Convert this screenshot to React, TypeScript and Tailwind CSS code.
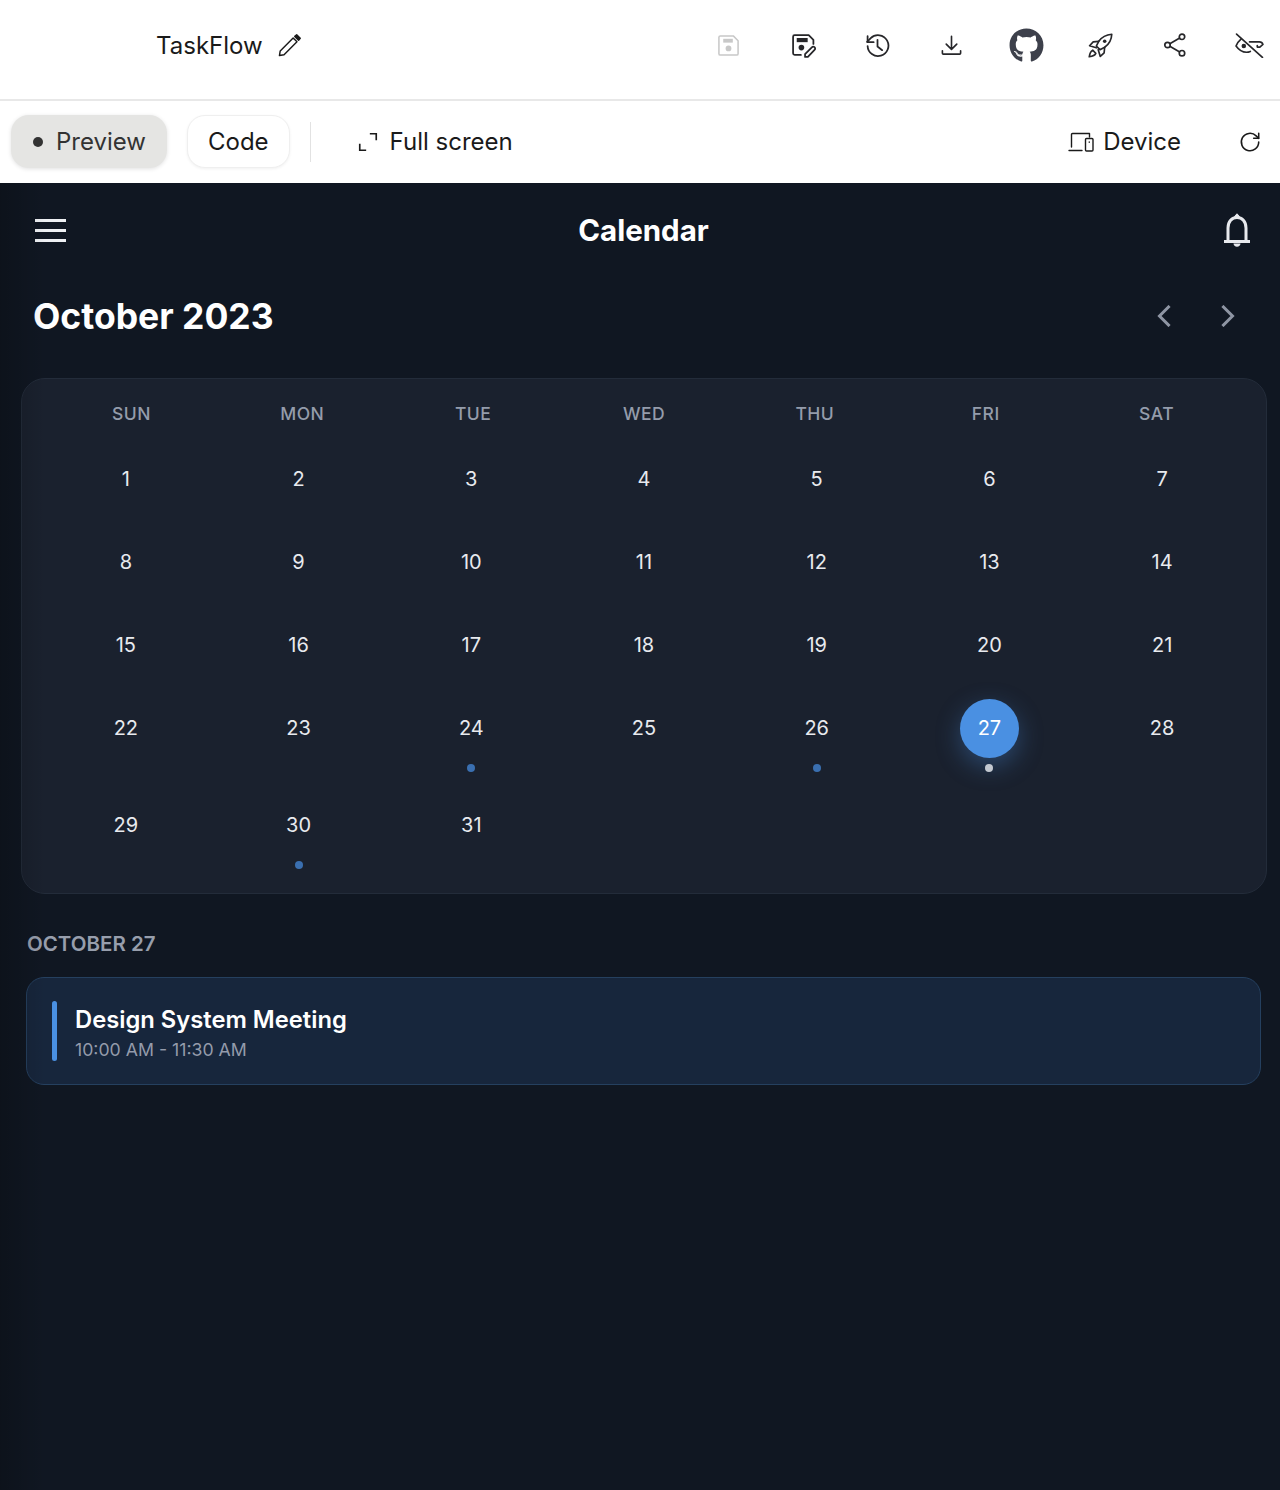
import React from "react";
import { FaGithub } from "react-icons/fa";

const weekdays = ["SUN", "MON", "TUE", "WED", "THU", "FRI", "SAT"];
const dots: Record<number, boolean> = { 24: true, 26: true, 27: true, 30: true };

type P = { className?: string };

function PencilIcon({ className }: P) {
  return (
    <svg viewBox="0 0 24 24" className={className} fill="none" stroke="currentColor" strokeWidth="1.5" strokeLinejoin="round">
      <path d="M1.500 22.500l.8-4.800L15.800 4.200l4 4L6.300 21.700z" />
      <path d="M17.500 2.500l2-1.700 3.700 3.700-1.700 2z" fill="currentColor" />
    </svg>
  );
}

function SaveIcon({ className }: P) {
  return (
    <svg viewBox="0 0 24 24" className={className} fill="none" stroke="currentColor" strokeWidth="1.6" strokeLinejoin="round">
      <path d="M3.500 2h13.500l5 5v13.500a1.500 1.500 0 0 1-1.500 1.500h-17a1.500 1.500 0 0 1-1.500-1.500v-17a1.500 1.500 0 0 1 1.500-1.500z" />
      <rect x="6.500" y="5" width="10" height="4" fill="currentColor" stroke="none" />
      <circle cx="12" cy="15" r="3" fill="currentColor" stroke="none" />
    </svg>
  );
}

function SaveEditIcon({ className }: P) {
  return (
    <svg viewBox="0 0 24 24" className={className} fill="none" stroke="currentColor" strokeWidth="1.7" strokeLinejoin="round" strokeLinecap="round">
      <path d="M9.500 21H3.500A1.500 1.500 0 0 1 2 19.500V3.500A1.500 1.500 0 0 1 3.500 2h13.500l4.500 4.500v4" />
      <rect x="5.500" y="4.800" width="10.500" height="4" fill="currentColor" stroke="none" />
      <circle cx="10" cy="14" r="2.700" fill="currentColor" stroke="none" />
      <path d="M13.500 23v-2.800l6.500-6.500a1.700 1.700 0 0 1 2.600 2.500l-6.400 6.800z" />
    </svg>
  );
}

function HistoryIcon({ className }: P) {
  return (
    <svg viewBox="0 0 24 24" className={className} fill="none" stroke="currentColor" strokeWidth="1.7" strokeLinecap="round" strokeLinejoin="round">
      <path d="M2.500 12.500A10 10 0 1 0 5.500 5L2 8.500" />
      <path d="M2.500 3v5.800h5.800" />
      <path d="M12 6.500v6.500l4.500 3.500" />
    </svg>
  );
}

function DownloadIcon({ className }: P) {
  return (
    <svg viewBox="0 0 24 24" className={className} fill="none" stroke="currentColor" strokeWidth="1.7" strokeLinecap="round" strokeLinejoin="round">
      <path d="M12 2.500v13.500M6.500 10.500l5.500 5.500 5.500-5.500M2.500 17.500V20a1 1 0 0 0 1 1h17a1 1 0 0 0 1-1v-2.500" />
    </svg>
  );
}

function RocketIcon({ className }: P) {
  return (
    <svg viewBox="0 0 24 24" className={className} fill="none" stroke="currentColor" strokeWidth="1.6" strokeLinecap="round" strokeLinejoin="round">
      <path d="M22.800 1.200c-5.300.4-9.500 2.600-12.500 6.800l-2.300 4.500 3.500 3.500 4.500-2.300c4.300-3 6.600-7.200 6.800-12.500z" />
      <path d="M10.300 8l-5.300.5-3.500 3.700 6.500 2" />
      <path d="M16 13.700l-.5 5.300-3.700 3.500-2-6.500" />
      <circle cx="16" cy="8" r="1.700" fill="currentColor" stroke="none" />
      <path d="M4.500 16.500c-1.700.7-2.800 3-3.300 6.300 3.300-.5 5.600-1.600 6.300-3.300z" />
    </svg>
  );
}

function ShareIcon({ className }: P) {
  return (
    <svg viewBox="0 0 24 24" className={className} fill="none" stroke="currentColor" strokeWidth="1.7">
      <circle cx="19" cy="3.800" r="2.700" />
      <circle cx="4.500" cy="12" r="2.700" />
      <circle cx="19" cy="20.200" r="2.700" />
      <path d="M6.800 10.700l9.900-5.600M6.800 13.300l9.900 5.600" />
    </svg>
  );
}

function EyeOffIcon({ className }: P) {
  return (
    <svg viewBox="0 0 28 24" className={className} fill="none" stroke="currentColor" strokeWidth="1.6" strokeLinecap="round" strokeLinejoin="round">
      <path d="M1.500 1l25 22.500" />
      <path d="M6 5.500C3.700 7.500 1.800 10 1 12.500c2.500 3.500 6 6 10 6 1.500 0 2.600-.3 3.800-.8" />
      <circle cx="8.500" cy="12.500" r="2.200" fill="currentColor" stroke="none" />
      <path d="M14 8.500h9.500c1.500 0 3 1 3.500 2.500l-3 2.500h-2.500v-1.500" />
    </svg>
  );
}

function ExpandIcon({ className }: P) {
  return (
    <svg viewBox="0 0 24 24" className={className} fill="none" stroke="currentColor" strokeWidth="1.8">
      <path d="M14 3h7v7M3 14v7h7" />
    </svg>
  );
}

function DeviceIcon({ className }: P) {
  return (
    <svg viewBox="0 0 26 24" className={className} fill="none" stroke="currentColor" strokeWidth="1.4" strokeLinecap="round" strokeLinejoin="round">
      <path d="M3.500 17V4.500a1 1 0 0 1 1-1H21.500V7" />
      <path d="M1 20.500h13" />
      <rect x="17.500" y="8.500" width="7.500" height="12.500" rx="1" />
      <path d="M21.250 12v.2" />
    </svg>
  );
}

function RefreshIcon({ className }: P) {
  return (
    <svg viewBox="0 0 24 24" className={className} fill="none" stroke="currentColor" strokeWidth="1.7" strokeLinecap="round" strokeLinejoin="round">
      <path d="M21.500 12a9.500 9.500 0 1 1-2.800-6.700L21.500 8" />
      <path d="M21.500 2.500V8H16" />
    </svg>
  );
}

function BellIcon({ className }: P) {
  return (
    <svg viewBox="0 0 28 34" className={className} fill="none" stroke="currentColor" strokeWidth="3" strokeLinejoin="round">
      <path d="M5 28V15C5 8.500 9 4.500 14 4.500S23 8.500 23 15v13" />
      <path d="M1 28.500h26" />
      <path d="M11.500 3.500L14 .8l2.500 2.700z" fill="currentColor" strokeWidth="1" />
      <path d="M10.500 30.500h7c0 2-1.500 3.200-3.500 3.200s-3.500-1.200-3.500-3.200z" fill="currentColor" stroke="none" />
    </svg>
  );
}

function ChevronIcon({ left, className }: P & { left?: boolean }) {
  return (
    <svg viewBox="0 0 14 22" className={className} fill="none" stroke="currentColor" strokeWidth="3" strokeLinecap="square">
      <path d={left ? "M11.500 2 2.500 11 11.500 20" : "M2.500 2 11.500 11 2.500 20"} />
    </svg>
  );
}

function DayCell({ day }: { day: number }) {
  const selected = day === 27;
  return (
    <div className="flex flex-col items-center pb-[24.1px]">
      <div
        className={
          selected
            ? "flex h-[59px] w-[59px] items-center justify-center rounded-full bg-[#4a90e2] text-[20px] font-normal text-white shadow-[0_8px_24px_rgba(74,144,226,0.35)]"
            : "flex h-[59px] w-[59px] items-center justify-center rounded-full text-[20px] font-normal text-[#e8eaee]"
        }
      >
        {day}
      </div>
      {dots[day] && (
        <div className={selected ? "mt-[6px] h-2 w-2 rounded-full bg-[#c3c8d0]" : "mt-[6px] h-2 w-2 rounded-full bg-[#3a6fb0]"} />
      )}
    </div>
  );
}

export default function App() {
  const days = Array.from({ length: 31 }, (_, i) => i + 1);
  return (
    <div className="flex min-h-[1490px] flex-col bg-white font-['Inter',sans-serif]">
      <header className="flex h-[101px] items-center justify-between border-b-2 border-[#e8e8e8] pb-[9px] pl-[156px] pr-[16px]">
        <div className="flex items-center gap-[15px] text-[#1a1a1a]">
          <span className="pt-[2px] text-[24px] leading-none">TaskFlow</span>
          <PencilIcon className="h-[23px] w-[23px]" />
        </div>
        <div className="flex items-center gap-[44.3px] text-[#27272a]">
          <div className="flex w-[30px] justify-center"><SaveIcon className="h-[23px] w-[23px] text-[#c8c8c8]" /></div>
          <div className="flex w-[30px] justify-center"><SaveEditIcon className="h-[25px] w-[25px]" /></div>
          <div className="flex w-[30px] justify-center"><HistoryIcon className="h-[25px] w-[25px]" /></div>
          <div className="flex w-[30px] justify-center"><DownloadIcon className="h-[23px] w-[23px]" /></div>
          <div className="flex w-[30px] justify-center"><FaGithub className="h-[35px] w-[35px] shrink-0 text-[#3d404b]" /></div>
          <div className="flex w-[30px] justify-center"><RocketIcon className="h-[25px] w-[25px]" /></div>
          <div className="flex w-[30px] justify-center"><ShareIcon className="h-[24px] w-[24px]" /></div>
          <div className="flex w-[30px] justify-center"><EyeOffIcon className="h-[25px] w-[29px] shrink-0" /></div>
        </div>
      </header>

      <div className="flex h-[82px] items-center justify-between pb-[1px] pl-[11px] pr-[19px]">
        <div className="flex items-center">
          <div className="flex h-[53px] items-center gap-[13px] rounded-[18px] bg-[#e5e5e3] pl-[22px] pr-[21px] shadow-[0_1px_4px_rgba(0,0,0,0.12)]">
            <span className="h-[10px] w-[10px] rounded-full bg-[#333]" />
            <span className="text-[24px] text-[#333]">Preview</span>
          </div>
          <div className="ml-[20px] flex h-[53px] items-center rounded-[18px] border border-[#efefef] bg-white px-[20px] shadow-[0_1px_3px_rgba(0,0,0,0.06)]">
            <span className="text-[24px] text-[#1a1a1a]">Code</span>
          </div>
          <div className="ml-[20px] h-[40px] w-px bg-[#e2e2e2]" />
          <div className="ml-[46px] flex items-center gap-[11px] text-[#1a1a1a]">
            <ExpandIcon className="h-[22px] w-[22px]" />
            <span className="text-[24px]">Full screen</span>
          </div>
        </div>
        <div className="flex items-center gap-[58px] text-[#1a1a1a]">
          <div className="flex items-center gap-[9px]">
            <DeviceIcon className="h-[24px] w-[26px]" />
            <span className="text-[24px]">Device</span>
          </div>
          <RefreshIcon className="h-[22px] w-[22px]" />
        </div>
      </div>

      <main className="relative flex-1 bg-[#101722] pb-8">
        <div className="pointer-events-none absolute inset-y-0 left-0 w-[45px] bg-gradient-to-r from-black/20 to-transparent" />
        <div className="flex h-[94px] items-center justify-between pl-[35px] pr-[29px]">
          <div className="flex w-[31px] flex-col gap-[7px]">
            <span className="h-[3px] w-[31px] bg-[#eef0f3]" />
            <span className="h-[3px] w-[31px] bg-[#eef0f3]" />
            <span className="h-[3px] w-[31px] bg-[#eef0f3]" />
          </div>
          <h1 className="mr-[2px] text-[29.5px] font-bold text-white">Calendar</h1>
          <BellIcon className="h-[34px] w-[28px] text-[#e8eaee]" />
        </div>

        <div className="flex h-[80px] items-center justify-between pl-[33px] pr-[45px]">
          <h2 className="text-[35.5px] font-bold text-white">October 2023</h2>
          <div className="flex items-center gap-[50px] text-[#8e95a3]">
            <ChevronIcon left className="mb-[2px] h-[22px] w-[14px]" />
            <ChevronIcon className="mb-[2px] h-[22px] w-[14px]" />
          </div>
        </div>

        <section className="ml-[21px] mr-[13px] mt-[21px] rounded-[24px] border border-[#232c3a] bg-[#1a212e] pt-[22px]">
          <div className="grid grid-cols-7 px-[24px] pb-[22px]">
            {weekdays.map((d) => (
              <div key={d} className="text-center text-[17.5px] font-medium tracking-[0.5px] text-[#949cab]">
                {d}
              </div>
            ))}
          </div>
          <div className="grid grid-cols-7 px-[17.5px]">
            {days.map((d) => (
              <DayCell key={d} day={d} />
            ))}
          </div>
        </section>

        <h3 className="ml-[27px] mt-[35px] text-[20.5px] font-semibold text-[#979eac]">OCTOBER 27</h3>
        <div className="ml-[26px] mr-[19px] mt-[18px] flex h-[108px] items-center gap-[18px] rounded-[18px] border border-[#25405f] bg-[#17263c] pl-[25px]">
          <div className="h-[60px] w-[5px] rounded-full bg-[#4a90e2]" />
          <div className="pt-[4px]">
            <div className="text-[23.75px] font-semibold leading-[32px] text-white">Design System Meeting</div>
            <div className="text-[17.7px] leading-[27px] text-[#949bab]">10:00 AM - 11:30 AM</div>
          </div>
        </div>
      </main>
    </div>
  );
}
